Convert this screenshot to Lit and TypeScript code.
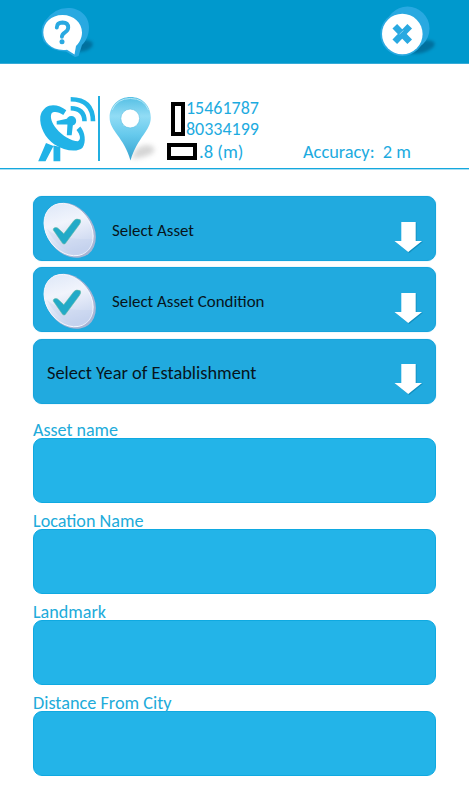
import { LitElement, html, css } from "lit";
import { customElement, property } from "lit/decorators.js";

/* A single line of text fitted to a fixed advance width. */
@customElement("fit-text")
class FitText extends LitElement {
  @property() text = "";
  @property({ type: Number }) width = 100;
  @property({ type: Number }) size = 18;
  static styles = css`
    :host { display: block; flex: none; }
    svg { display: block; overflow: visible; }
    text { font-family: "Carlito", "Noto Sans", "Open Sans", sans-serif; fill: currentColor; white-space: pre; }
  `;
  render() {
    return html`<svg width=${this.width} height="20">
      <text x="0" y="15" font-size=${this.size} textLength=${this.width} lengthAdjust="spacingAndGlyphs">${this.text}</text>
    </svg>`;
  }
}

const helpIcon = html`<svg width="60" height="54" viewBox="36 4 60 54">
  <defs><filter id="b1" x="-30%" y="-30%" width="160%" height="160%"><feGaussianBlur stdDeviation="1.8" /></filter></defs>
  <ellipse cx="82" cy="46" rx="11" ry="5.5" fill="#00638f" opacity=".75" filter="url(#b1)" transform="rotate(-12 82 46)" />
  <path d="M68 8C80 8 89 16 89 27C89 35 86 41 82 45L78.500 56L75 57L66 51.500Q50 51 43.500 41Q39 30 45 21Q54 8 68 8Z" fill="#29a9e1" />
  <path d="M62.500 15C74 15 82 23 82 32.500C82 38 79.500 42.500 76 46L74.500 54.500L67 49.800C52 51.500 43.300 42 43.300 32.500C43.300 23 51 15 62.500 15Z" fill="#fff" />
  <path d="M56.800 27.500Q57 22.500 62.500 22.500Q68.200 22.700 68.200 27.500Q68.200 30.300 65 32.300Q61.900 34.200 61.900 36.800" fill="none" stroke="#29a9e1" stroke-width="3.900" stroke-linecap="round" />
  <circle cx="62" cy="41.800" r="2.500" fill="#29a9e1" />
</svg>`;

const closeIcon = html`<svg width="62" height="54" viewBox="376 3 62 54">
  <defs><filter id="b2" x="-30%" y="-30%" width="160%" height="160%"><feGaussianBlur stdDeviation="1.8" /></filter></defs>
  <ellipse cx="421" cy="46" rx="14" ry="6" fill="#00638f" opacity=".75" filter="url(#b2)" transform="rotate(-15 421 46)" />
  <circle cx="407.500" cy="27.500" r="22" fill="#29a9e1" />
  <circle cx="402.300" cy="33" r="22" fill="#29a9e1" />
  <circle cx="402.300" cy="33" r="20.300" fill="#fff" />
  <path d="M397 27.500L407.500 38.500M407.500 27.500L397 38.500" stroke="#29a9e1" stroke-width="6.400" stroke-linecap="square" fill="none" />
  <path d="M399.500 33.200L403.500 29.500" stroke="#a8dcf3" stroke-width=".7" />
</svg>`;

const dishIcon = html`<svg width="58" height="67" viewBox="38 95 58 67">
  <g fill="#21b3e7">
    <path d="M45.700 107.500C51 103.300 60 105 66.300 110.300L63.300 115C58.500 111.700 53.500 111.200 51.500 113.500C49.800 117.500 52 123 56.300 128.500C62.300 136 71 141 78 141.200C81.500 139 80 134.500 76.500 130L80.300 126.500C85 132 86.500 142 82.500 147.700C78 152.500 64 151 54.500 144.500C45 138 39.300 126.500 40.300 116.500Q41.300 111 45.700 107.500Z" />
    <path d="M46 143L53.500 146L45.500 161.300H38.200ZM53.500 145.500L60.300 147V161.300H53.500Z" />
    <circle cx="71.300" cy="120.900" r="4.900" />
    <path d="M56.700 121L68 118.500L70 124.200L56.700 124.400ZM67.500 123.500L73 124L71.700 135.300H66.800Z" />
  </g>
  <g fill="none" stroke="#21b3e7" stroke-width="4.600">
    <path d="M70.700 108.300Q84.200 108.300 84.500 121.200" />
    <path d="M70.700 99.300Q92.700 99.300 93 121.200" />
  </g>
</svg>`;

const pinIcon = html`<svg width="52" height="70" viewBox="108 94 52 70">
  <defs>
    <linearGradient id="p" x1="0" y1="0" x2="0" y2="1"><stop offset="0" stop-color="#55bfe4" /><stop offset=".3" stop-color="#91dcf5" /><stop offset=".6" stop-color="#65c9ec" /><stop offset="1" stop-color="#35a2cf" /></linearGradient>
    <filter id="b3" x="-30%" y="-30%" width="160%" height="160%"><feGaussianBlur stdDeviation="2.500" /></filter>
  </defs>
  <path d="M131 159L137 148Q149 142 154 148Q157 156 131 159Z" fill="#999" opacity=".4" filter="url(#b3)" />
  <path d="M130.500 97C142 97 150.800 105.500 150.800 117.500C150.800 131 137.500 137 130.500 160.500C124 137 109.600 131 109.600 117.500C109.600 105.500 119 97 130.500 97Z" fill="url(#p)" />
  <path d="M112 110Q117 98.500 130.500 98.500Q144 98.500 148.500 110" fill="none" stroke="#b3e8f7" stroke-width="1" />
  <circle cx="130.200" cy="118.500" r="9.400" fill="#fff" stroke="#58bce0" stroke-width=".6" />
</svg>`;

const checkIcon = html`<svg width="54" height="56" viewBox="42 200 54 56">
  <defs><linearGradient id="g" x1="0" y1="0" x2="1" y2=".3"><stop offset="0" stop-color="#dbe6f7" /><stop offset=".45" stop-color="#f1f4fc" /><stop offset="1" stop-color="#c6d3ee" /></linearGradient></defs>
  <ellipse cx="69" cy="228.300" rx="30" ry="23" transform="rotate(52 69 228.300)" fill="#a9b5d4" />
  <ellipse cx="67.600" cy="227.600" rx="28.500" ry="21.800" transform="rotate(52 67.600 227.600)" fill="url(#g)" stroke="#f7f9ff" stroke-width=".9" />
  <path d="M46 227Q57 238 91.500 237Q92 251 79 252.500Q58 250 46 227Z" fill="#c2d0ed" opacity=".35" />
  <path d="M52.300 228C52 225.500 55.500 224.800 57.500 226.700L62.800 231.700L73 218.500Q75.500 216 79.300 217.800Q80.300 220 78.500 222.300L64.300 241.500Q63 242.800 61.500 241.300Z" fill="#22aac8" stroke="#5eb9a0" stroke-width=".6" />
</svg>`;

const arrow = html`<svg class="arrow" width="30" height="33" viewBox="0 0 30 33">
  <path d="M8 1.500H22.500V20.700H29L15.200 32L1.500 20.700H8Z" fill="#087fae" opacity=".65" />
  <path d="M7.300 1H21.700V20H28L14.200 31L.5 20H7.300Z" fill="#fff" />
</svg>`;

@customElement("app-root")
class AppRoot extends LitElement {
  static styles = css`
    :host { display: block; height: 800px; background: #fff; overflow: hidden; }
    * { box-sizing: border-box; }
    svg { display: block; flex: none; }
    header { height: 64px; background: #0099cd; border-bottom: 1px solid #36abd7; display: flex; justify-content: space-between; padding: 4px 31px 0 36px; }
    .info { height: 105px; border-bottom: 1px solid #14a8de; box-shadow: 0 1px 0 #a9def2; display: flex; padding-top: 31px; padding-left: 38px; color: #1dabdf; }
    .rule { width: 1.500px; height: 65px; background: #21aee0; margin: 1px 8.500px 0 2px; flex: none; }
    .pin { margin-top: -1px; }
    .coords { display: flex; flex-direction: column; margin-left: 6.500px; padding-top: 4px; width: 136px; }
    .pair { display: flex; height: 43.500px; padding-left: 4.500px; }
    .tall, .wide { border: 4px solid #000; background: #fff; flex: none; }
    .tall { width: 13.500px; height: 34px; margin-top: 3px; }
    .wide { width: 30px; height: 17px; margin-right: 2.500px; }
    .digits { display: flex; flex-direction: column; gap: 1px; padding-left: 1.500px; }
    .altitude { display: flex; }
    .accuracy { padding-top: 47.500px; }
    main { padding: 27px 33px 0 32.500px; }
    .select { height: 65px; width: 403.900px; margin-bottom: 6.400px; border-radius: 9px; background: #21aadf; border: 1px solid #15a4dc; box-shadow: 0 0 1px #5dc0e8; display: flex; align-items: center; padding: 2px 11px 0 9px; color: #07141b; }
    .select .name { flex: 1; padding: 2px 0 0 15.500px; }
    .select.plain .name { padding-top: 4px; padding-left: 4px; }
    .arrow { margin-top: 15px; }
    .fields { padding-top: 10.100px; }
    .field { height: 91.200px; color: #21abda; }
    .label { height: 17.600px; padding-top: .600px; }
    .box { height: 65px; width: 403.900px; border-radius: 9px; background: #23b4e8; border: 1px solid #0fa9e1; }
  `;
  render() {
    const selects: [string, number][] = [["Select Asset", 82], ["Select Asset Condition", 152.5]];
    const fields: [string, number][] = [["Asset name", 85], ["Location Name", 110.5], ["Landmark", 73], ["Distance From City", 138.5]];
    return html`
      <header>${helpIcon}${closeIcon}</header>
      <section class="info">
        ${dishIcon}<div class="rule"></div><div class="pin">${pinIcon}</div>
        <div class="coords">
          <div class="pair"><div class="tall"></div>
            <div class="digits">
              <fit-text text="15461787" width="73" size="18.3"></fit-text>
              <fit-text text="80334199" width="73" size="18.3"></fit-text>
            </div>
          </div>
          <div class="altitude"><div class="wide"></div><fit-text text=".8 (m)" width="44.5" size="18"></fit-text></div>
        </div>
        <div class="accuracy"><fit-text .text=${"Accuracy:\u00a0 2 m"} width="108" size="18"></fit-text></div>
      </section>
      <main>
        ${selects.map(([t, w]) => html`<div class="select">${checkIcon}<div class="name"><fit-text .text=${t} .width=${w} size="16.8"></fit-text></div>${arrow}</div>`)}
        <div class="select plain"><div class="name"><fit-text text="Select Year of Establishment" width="209.5" size="18.2"></fit-text></div>${arrow}</div>
        <div class="fields">
          ${fields.map(([t, w]) => html`<div class="field"><div class="label"><fit-text .text=${t} .width=${w} size="18"></fit-text></div><div class="box"></div></div>`)}
        </div>
      </main>
    `;
  }
}
